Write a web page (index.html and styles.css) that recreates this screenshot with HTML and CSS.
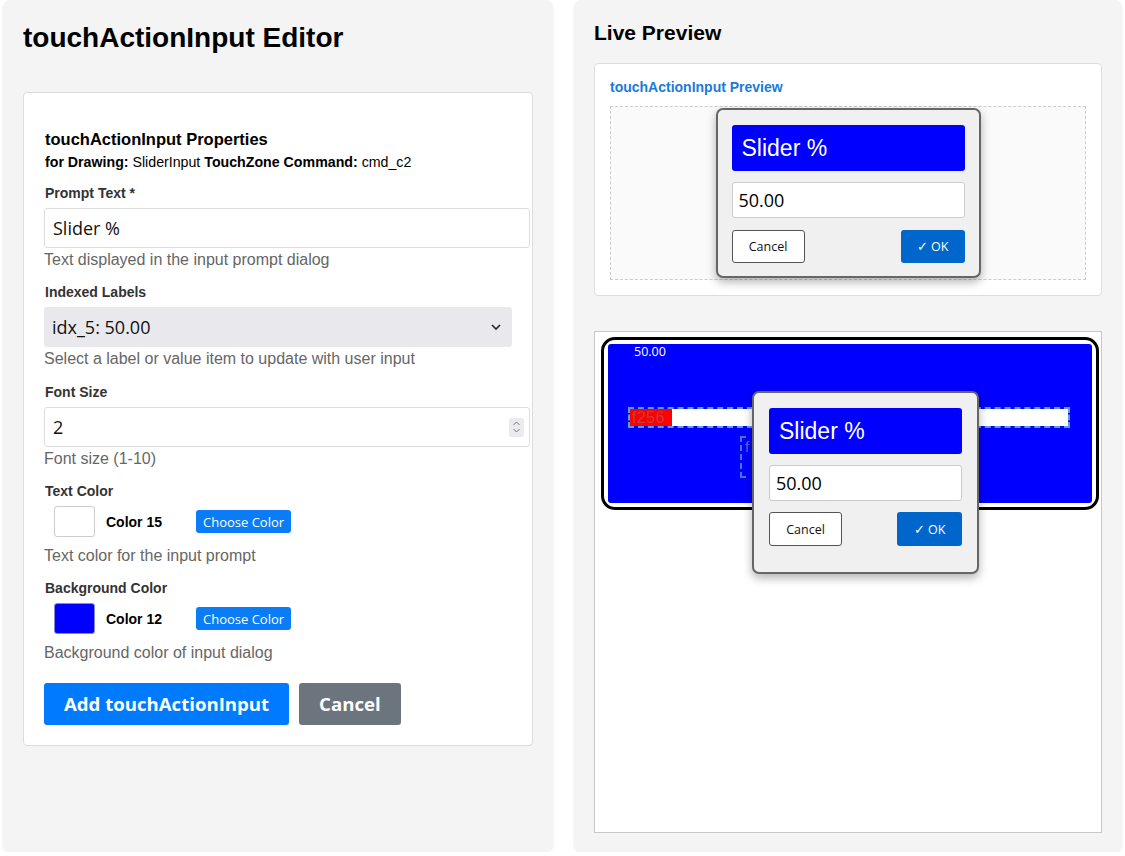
FILE: index.html
```html
<!DOCTYPE html>
<html lang="en">
<head>
    <meta charset="UTF-8">
    <meta name="viewport" content="width=device-width, initial-scale=1.0">
    <title>touchActionInput Editor</title>
    <link rel="stylesheet" href="styles.css">
</head>
<body>

    <div class="layout">
        <div class="panel editor-panel">
            <h2>touchActionInput Editor</h2>

            <div class="editor-card">
                <h3>touchActionInput Properties</h3>
                <div class="subtitle"><b>for Drawing:</b> SliderInput <b>TouchZone Command:</b> cmd_c2</div>

                <div class="form-group">
                    <label for="prompt-text">Prompt Text *</label>
                    <input type="text" id="prompt-text" class="text-input" value="Slider %">
                    <div class="hint">Text displayed in the input prompt dialog</div>
                </div>

                <div class="form-group">
                    <label for="indexed-label">Indexed Labels</label>
                    <div class="select-wrap">
                        <select id="indexed-label">
                            <option>idx_5: 50.00</option>
                        </select>
                        <svg class="select-arrow" width="10" height="6" viewBox="0 0 10 6">
                            <path d="M1 1 L5 5 L9 1" fill="none" stroke="#222" stroke-width="1.6"/>
                        </svg>
                    </div>
                    <div class="hint">Select a label or value item to update with user input</div>
                </div>

                <div class="form-group">
                    <label for="font-size">Font Size</label>
                    <div class="number-wrap">
                        <input type="number" id="font-size" class="text-input" value="2" min="1" max="10">
                        <span class="spinner">
                            <svg width="9" height="14" viewBox="0 0 9 14">
                                <path d="M1.5 5 L4.5 2 L7.5 5 M1.5 9 L4.5 12 L7.5 9" fill="none" stroke="#777" stroke-width="1"/>
                            </svg>
                        </span>
                    </div>
                    <div class="hint">Font size (1-10)</div>
                </div>

                <div class="form-group">
                    <label>Text Color</label>
                    <div class="color-row">
                        <span class="swatch swatch-white"></span>
                        <span class="color-name">Color 15</span>
                        <button class="choose-btn">Choose Color</button>
                    </div>
                    <div class="hint row-hint">Text color for the input prompt</div>
                </div>

                <div class="form-group">
                    <label>Background Color</label>
                    <div class="color-row">
                        <span class="swatch swatch-blue"></span>
                        <span class="color-name">Color 12</span>
                        <button class="choose-btn">Choose Color</button>
                    </div>
                    <div class="hint row-hint">Background color of input dialog</div>
                </div>

                <div class="actions">
                    <button class="btn btn-primary">Add touchActionInput</button>
                    <button class="btn btn-secondary">Cancel</button>
                </div>
            </div>
        </div>

        <div class="panel preview-panel">
            <h2>Live Preview</h2>

            <div class="preview-card">
                <div class="preview-title">touchActionInput Preview</div>
                <div class="preview-area">
                    <div class="prompt-dialog">
                        <div class="prompt-header">Slider %</div>
                        <input type="text" class="prompt-input" value="50.00">
                        <div class="prompt-buttons">
                            <button class="prompt-cancel">Cancel</button>
                            <button class="prompt-ok">&#10003; OK</button>
                        </div>
                    </div>
                </div>
            </div>

            <div class="canvas-card">
                <div class="drawing-frame">
                    <div class="drawing-fill"></div>
                </div>
                <div class="drawing-value">50.00</div>
                <div class="slider-bar">
                    <div class="slider-knob">f256</div>
                </div>
                <div class="slider-tag">f</div>

                <div class="prompt-dialog canvas-dialog">
                    <div class="prompt-header">Slider %</div>
                    <input type="text" class="prompt-input" value="50.00">
                    <div class="prompt-buttons">
                        <button class="prompt-cancel">Cancel</button>
                        <button class="prompt-ok">&#10003; OK</button>
                    </div>
                </div>
            </div>
        </div>
    </div>

</body>
</html>
```

FILE: styles.css
```css
* {
    box-sizing: border-box;
}

body {
    margin: 0;
    background-color: white;
    font-family: "Liberation Sans", Arial, sans-serif;
    color: #000;
}

.layout {
    display: flex;
    gap: 21px;
    padding: 0 3px;
}

.panel {
    height: 852px;
    background-color: #f4f4f4;
    border-radius: 8px;
    box-shadow: 0 1px 3px rgba(0, 0, 0, 0.08);
}

.editor-panel {
    width: 550px;
    padding: 22px 20px;
}

.preview-panel {
    width: 548px;
    padding: 21px 20px 19px;
}

.editor-panel h2 {
    margin: 0 0 38px;
    font-size: 28px;
    line-height: 32px;
}

.preview-panel h2 {
    margin: 0 0 18px;
    font-size: 21px;
    line-height: 24px;
}

/* editor form */
.editor-card {
    background-color: white;
    border: 1px solid #ddd;
    border-radius: 4px;
    padding: 20px;
}

.editor-card h3 {
    margin: 17px 0 5px 1px;
    font-size: 16.5px;
    line-height: 19px;
}

.subtitle {
    margin: 0 0 14.5px 1px;
    font-size: 14.2px;
    line-height: 16px;
}

.form-group {
    margin-bottom: 15.5px;
}

.form-group label {
    display: block;
    margin: 0 0 6px 1px;
    font-size: 14px;
    line-height: 17px;
    font-weight: bold;
    color: #333;
}

.text-input {
    display: block;
    width: calc(100% + 18px);
    height: 40px;
    padding: 0 8px;
    border: 1px solid #ddd;
    border-radius: 3px;
    font-family: "Open Sans", sans-serif;
    font-size: 18px;
    color: #111;
    background-color: white;
    outline: none;
}

.select-wrap,
.number-wrap {
    position: relative;
}

.select-wrap select {
    display: block;
    width: 100%;
    height: 40px;
    padding: 0 8px;
    border: none;
    border-radius: 3px;
    background-color: #e9e9ed;
    font-family: "Open Sans", sans-serif;
    font-size: 18px;
    color: #111;
    appearance: none;
    -webkit-appearance: none;
}

.select-arrow {
    position: absolute;
    right: 11px;
    top: 17px;
    pointer-events: none;
}

.number-wrap input::-webkit-inner-spin-button,
.number-wrap input::-webkit-outer-spin-button {
    -webkit-appearance: none;
    margin: 0;
}

.spinner {
    position: absolute;
    right: -12px;
    top: 11px;
    width: 15px;
    height: 19px;
    display: flex;
    align-items: center;
    justify-content: center;
    background-color: #ebebef;
    border-radius: 2px;
}

.hint {
    margin: 3px 0 0;
    font-size: 16px;
    line-height: 18px;
    color: #666;
}

.row-hint {
    margin-top: 9.5px;
}

.color-row {
    display: flex;
    align-items: center;
    padding: 0 10px;
    gap: 11px;
}

.swatch {
    width: 41px;
    height: 31px;
    border: 1px solid #ccc;
    border-radius: 3px;
}

.swatch-white {
    background-color: #fff;
}

.swatch-blue {
    background-color: #0000ff;
    border-color: #8888dd;
}

.color-name {
    width: 79px;
    font-size: 14px;
    font-weight: bold;
}

.choose-btn {
    height: 23px;
    padding: 0 7px;
    border: none;
    border-radius: 3px;
    background-color: #0a7cf6;
    color: white;
    font-family: "Open Sans", sans-serif;
    font-size: 13px;
    cursor: pointer;
}

.actions {
    display: flex;
    gap: 10px;
    margin-top: 21px;
}

.btn {
    height: 42px;
    padding: 0 20px;
    border: none;
    border-radius: 3px;
    color: white;
    font-family: "Open Sans", sans-serif;
    font-size: 18.6px;
    font-weight: bold;
    cursor: pointer;
}

.btn-primary {
    background-color: #007bff;
}

.btn-secondary {
    background-color: #6c757d;
}

/* preview */
.preview-card {
    background-color: white;
    border: 1px solid #ddd;
    border-radius: 4px;
    padding: 15px;
}

.preview-title {
    font-size: 14px;
    line-height: 16px;
    font-weight: bold;
    color: #1a7bd8;
    margin-bottom: 11px;
}

.preview-area {
    height: 174px;
    border: 1px dashed #ccc;
    background-color: #fafafa;
    display: flex;
    justify-content: center;
    align-items: center;
}

.prompt-dialog {
    width: 265px;
    padding: 15px 14px 13px;
    background-color: #f0f0f0;
    border: 2px solid #666;
    border-radius: 7px;
    box-shadow: 0 4px 10px rgba(0, 0, 0, 0.3);
}

.prompt-header {
    height: 46px;
    padding: 0 10px;
    display: flex;
    align-items: center;
    background-color: #0000ff;
    border-radius: 3px;
    color: white;
    font-size: 23px;
}

.prompt-input {
    display: block;
    width: 100%;
    height: 36px;
    margin-top: 11px;
    padding: 0 6px;
    border: 1px solid #ccc;
    border-radius: 3px;
    background-color: white;
    font-family: "Open Sans", sans-serif;
    font-size: 18px;
    color: #000;
    outline: none;
}

.prompt-buttons {
    display: flex;
    justify-content: space-between;
    margin-top: 12px;
}

.prompt-cancel,
.prompt-ok {
    height: 33px;
    border-radius: 3px;
    font-family: "Open Sans", sans-serif;
    font-size: 12.5px;
    cursor: pointer;
}

.prompt-cancel {
    width: 73px;
    background-color: white;
    border: 1px solid #555;
    color: #111;
}

.prompt-ok {
    width: 64px;
    background-color: #0066cc;
    border: none;
    color: white;
}

/* drawing canvas */
.canvas-card {
    position: relative;
    height: 502px;
    margin-top: 35px;
    background-color: white;
    border: 1px solid #c8c8c8;
}

.drawing-frame {
    position: absolute;
    left: 6px;
    top: 5px;
    width: 498px;
    height: 173px;
    padding: 4px;
    border: 3px solid #000;
    border-radius: 14px;
}

.drawing-fill {
    height: 100%;
    background-color: #0000ff;
    border-radius: 3px;
}

.drawing-value {
    position: absolute;
    left: 39px;
    top: 11px;
    font-family: "Open Sans", sans-serif;
    font-size: 12.5px;
    color: white;
}

.slider-bar {
    position: absolute;
    left: 35px;
    top: 77px;
    width: 438px;
    height: 17px;
    background-color: white;
    outline: 2px dashed #5c9ce6;
}

.slider-knob {
    width: 42px;
    height: 100%;
    background-color: #ff0000;
    color: #cc3a3a;
    font-size: 16px;
    line-height: 17px;
    padding-left: 2px;
    letter-spacing: 0.5px;
}

.slider-tag {
    position: absolute;
    left: 145px;
    top: 104px;
    width: 19px;
    height: 42px;
    border: 2px dashed #3f78d8;
    color: #4f6fd0;
    font-size: 15px;
    padding-left: 3px;
}

.canvas-dialog {
    position: absolute;
    left: 157px;
    top: 59px;
    width: 227px;
    padding: 15px 15px 26px;
}

.canvas-dialog .prompt-buttons {
    margin-top: 11px;
}

.canvas-dialog .prompt-cancel,
.canvas-dialog .prompt-ok {
    height: 34px;
}

.canvas-dialog .prompt-ok {
    width: 65px;
}
```
